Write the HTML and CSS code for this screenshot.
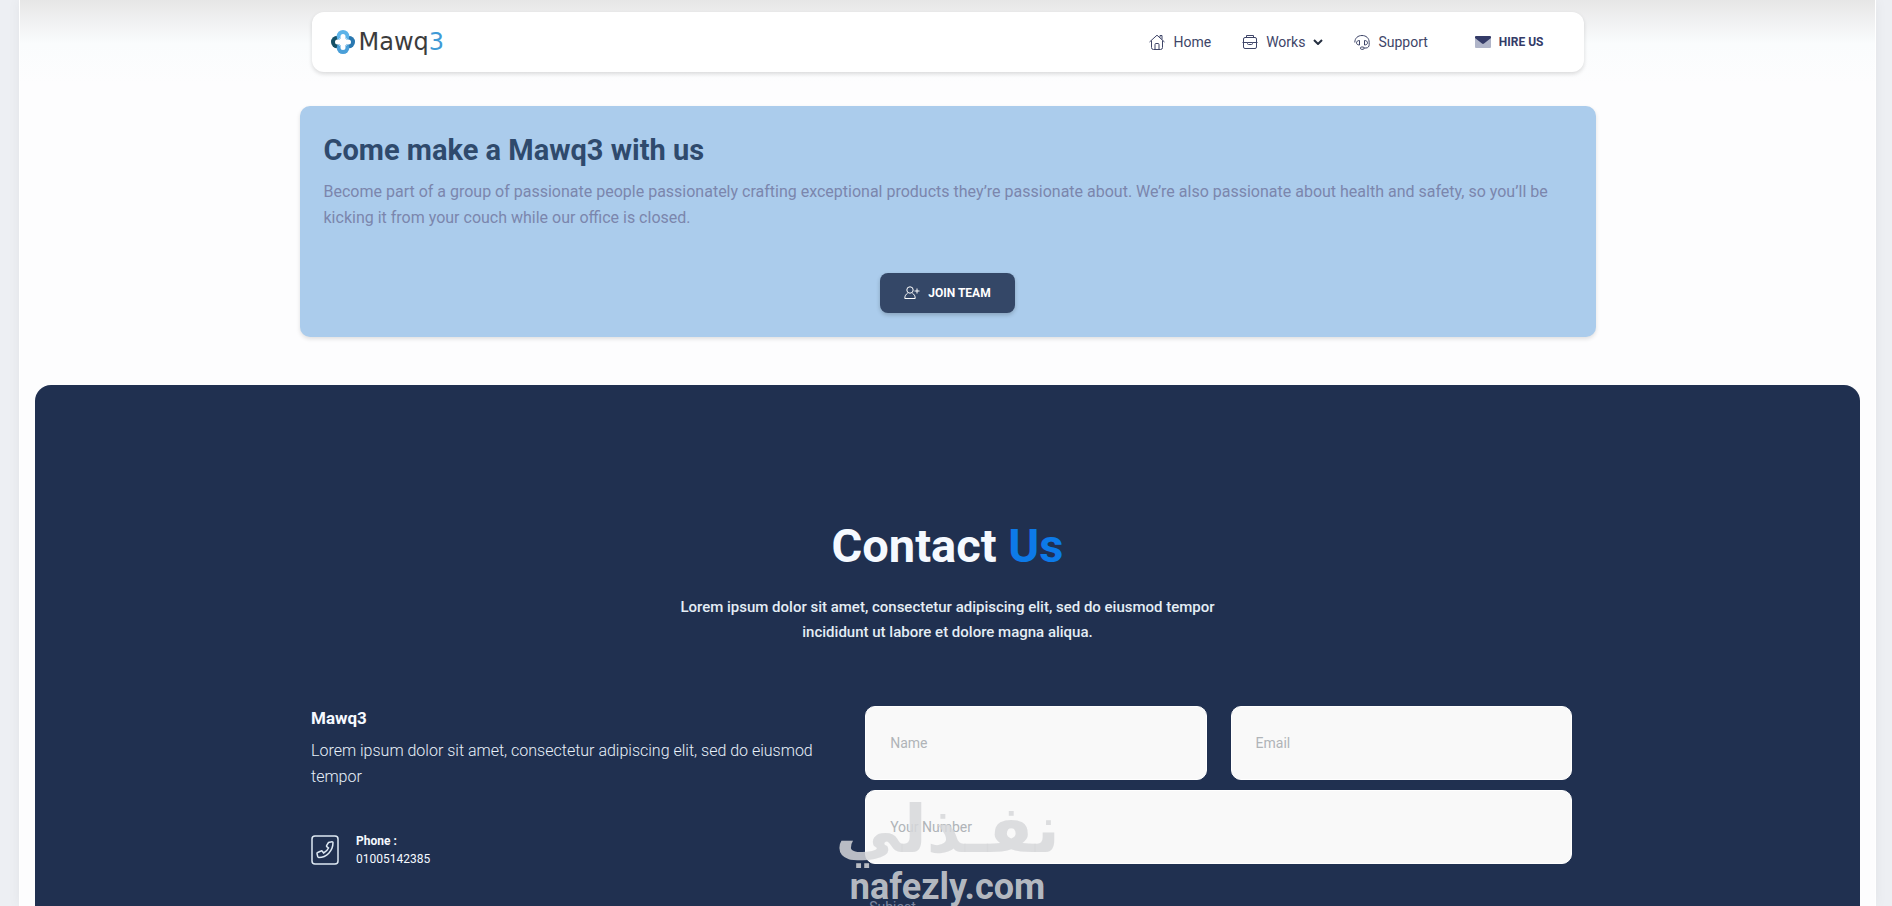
FILE: index.html
```
<!DOCTYPE html>
<html lang="en">
<head>
    <meta charset="UTF-8">
    <meta name="viewport" content="width=device-width, initial-scale=1.0">
    <title>Mawq3 - Contact Us</title>
    <link rel="stylesheet" href="styles.css">
</head>
<body>
    <div class="page">
        <header class="navbar">
            <a href="#" class="logo">
                <svg class="logo-mark" viewBox="0 0 26 26" aria-hidden="true">
                    <circle cx="7.300" cy="13" r="6.300" fill="#155066"/>
                    <circle cx="18.700" cy="13" r="6.300" fill="#2a78b0"/>
                    <circle cx="13" cy="7.300" r="6.300" fill="#5cb3e8"/>
                    <circle cx="13" cy="18.700" r="6.300" fill="#4a9fd8"/>
                    <path d="M13 7.500v11M7.500 13h11" fill="none" stroke="#fff" stroke-width="5" stroke-linecap="round"/>
                    <path d="M9.500 9.500l7 7M16.500 9.500l-7 7" fill="none" stroke="#fff" stroke-width="1"/>
                </svg>
                <span class="logo-text">Mawq<span class="logo-accent">3</span></span>
            </a>
            <nav class="nav-links">
                <a href="#home" class="nav-link">
                    <svg class="icon" viewBox="0 0 16 16" aria-hidden="true">
                        <path d="M.5 8 8 1.2 15.5 8M2.500 6.500v7a2 2 0 0 0 2 2h7a2 2 0 0 0 2-2v-7M11 3.500V1.500h2v4M6 15.500V10.500a1 1 0 0 1 1-1h2a1 1 0 0 1 1 1v5"/>
                    </svg>
                    Home
                </a>
                <a href="#works" class="nav-link">
                    <svg class="icon" viewBox="0 0 16 16" aria-hidden="true">
                        <rect x="1.500" y="3.500" width="13" height="11" rx="1.500"/>
                        <path d="M4.500 3.500v-2h7v2M.5 8.500h5M10.500 8.500h5M5.500 8.500v1a1 1 0 0 0 1 1h3a1 1 0 0 0 1-1v-1z"/>
                    </svg>
                    Works
                    <svg class="chevron" viewBox="0 0 10 6" aria-hidden="true"><path d="M1 1l4 4 4-4"/></svg>
                </a>
                <a href="#support" class="nav-link">
                    <svg class="icon" viewBox="0 0 16 16" aria-hidden="true">
                        <path d="M.8 8.500C.8 4 4 1.500 8 1.500s7.200 2.500 7.200 7v2c0 2-1.200 3.500-3.200 3.500h-2M5.500 6.500v4.500C3.500 11 2.500 10 2.500 8.800s1-2.300 3-2.300zM10.500 6.500v4.500c2 0 3-1 3-2.200s-1-2.300-3-2.300z"/>
                        <rect x="6.500" y="13" width="3.500" height="2.300" rx="1"/>
                    </svg>
                    Support
                </a>
                <a href="#hire" class="nav-link hire">
                    <svg class="icon-solid" viewBox="0 0 16 12" aria-hidden="true">
                        <rect y="1" width="16" height="11" rx="1" fill="#b0b5c9"/>
                        <path d="M1 0h14a1 1 0 0 1 1 1v1L9 7.500q-1 .8-2 0L0 2V1a1 1 0 0 1 1-1z" fill="#343b68"/>
                    </svg>
                    HIRE US
                </a>
            </nav>
        </header>

        <section class="join-card">
            <h2>Come make a Mawq3 with us</h2>
            <p>Become part of a group of passionate people passionately crafting exceptional products they’re passionate about. We’re also passionate about health and safety, so you’ll be kicking it from your couch while our office is closed.</p>
            <button type="button" class="join-button">
                <svg class="icon" viewBox="0 0 16 16" aria-hidden="true">
                    <circle cx="6" cy="5" r="3.200"/>
                    <path d="M3.500 8.500C1.800 9.200.8 10.800.8 13.500h10.400c0-2.700-1-4.300-2.700-5M13 3.500v5M10.500 6h5"/>
                </svg>
                JOIN TEAM
            </button>
        </section>

        <section class="contact">
            <div class="contact-heading">
                <h1>Contact <span>Us</span></h1>
                <p>Lorem ipsum dolor sit amet, consectetur adipiscing elit, sed do eiusmod tempor incididunt ut labore et dolore magna aliqua.</p>
            </div>

            <div class="contact-grid">
                <div class="contact-info">
                    <h3>Mawq3</h3>
                    <p>Lorem ipsum dolor sit amet, consectetur adipiscing elit, sed do eiusmod tempor</p>
                    <div class="phone">
                        <svg class="phone-icon" viewBox="0 0 28 30" aria-hidden="true">
                            <rect x="1" y="1" width="26" height="28" rx="3"/>
                            <path d="M17.500 7.500l3.500-.8c.6 0 1 .3 1 .9C22 16 15.500 22.500 7.800 22.500c-.5 0-.9-.3-1-.8L6 18.600c-.1-.5.1-.9.600-1.100l3.500-1.500c.4-.2.9-.1 1.200.3l1.300 1.700c2.200-1.100 3.900-2.800 4.900-5l-1.700-1.300c-.3-.3-.4-.8-.2-1.200z"/>
                        </svg>
                        <div>
                            <strong>Phone :</strong>
                            <a href="tel:01005142385">01005142385</a>
                        </div>
                    </div>
                </div>

                <form class="contact-form">
                    <input type="text" name="name" placeholder="Name" aria-label="Name">
                    <input type="email" name="email" placeholder="Email" aria-label="Email">
                    <input type="tel" name="number" class="wide" placeholder="Your Number" aria-label="Your Number">
                    <label for="subject" class="wide">Subject</label>
                    <input type="text" id="subject" name="subject" class="wide">
                </form>
            </div>
        </section>

        <div class="watermark">
            <span class="watermark-ar" lang="ar" dir="rtl">نفـذلي</span>
            <span class="watermark-en">nafezly.com</span>
        </div>
    </div>
</body>
</html>
```
FILE: styles.css
```
/* Base Reset and Variables */
* {
    margin: 0;
    padding: 0;
    box-sizing: border-box;
}

:root {
    --navy: #203050;
    --dark: #344767;
    --sky: #abccec;
    --muted: #7b86ad;
    --blue: #0d7ae8;
    --field: #f9f9f9;
}

html {
    background: #edeff3;
}

body {
    height: 100vh;
    overflow: hidden;
    font-family: Roboto, "Liberation Sans", sans-serif;
    font-size: 16px;
    color: var(--dark);
}

a {
    color: inherit;
    text-decoration: none;
}

.page {
    position: relative;
    height: 100%;
    overflow: hidden;
    margin: 0 16px 0 19px;
    padding: 12px 15px 0;
    border-left: 1px solid #fff;
    border-right: 1px solid #fff;
    background: linear-gradient(#e6e6e6, #eeeeef 16px, #fafcfd 44px, #fdfdfe 84px);
    box-shadow: 0 0 12px rgba(0, 0, 0, 0.05);
}

/* Navbar */
.navbar {
    display: flex;
    justify-content: space-between;
    align-items: center;
    max-width: 1272px;
    height: 60px;
    margin: 0 auto 34px;
    padding: 0 40px 0 18px;
    border-radius: 12px;
    background: #fff;
    box-shadow: 0 2px 4px rgba(0, 0, 0, 0.14);
}

.logo {
    display: flex;
    align-items: center;
    gap: 3px;
}

.logo-mark {
    width: 26px;
    height: 26px;
}

.logo-text {
    font-family: "DejaVu Sans", sans-serif;
    font-size: 24px;
    line-height: 28px;
    color: #3c3c3c;
}

.logo-accent {
    color: #3f9ad6;
}

.nav-links {
    display: flex;
    align-items: center;
    gap: 31px;
    font-size: 14px;
}

.nav-link {
    display: flex;
    align-items: center;
    gap: 8px;
    color: #3e4568;
}

.icon {
    width: 16px;
    height: 16px;
    fill: none;
    stroke: currentColor;
    stroke-width: 1;
}

.icon-solid {
    width: 16px;
    height: 12px;
}

.chevron {
    width: 10px;
    height: 6px;
    fill: none;
    stroke: #252f40;
    stroke-width: 2;
}

.hire {
    margin-left: 16px;
    font-size: 12px;
    font-weight: 700;
    color: #343b68;
}

/* Join Card */
.join-card {
    max-width: 1296px;
    margin: 0 auto 48px;
    padding: 24px;
    border-radius: 10px;
    background: var(--sky);
    box-shadow: 0 2px 4px rgba(0, 0, 0, 0.12);
}

.join-card h2 {
    margin-bottom: 8px;
    font-size: 29px;
    line-height: 41px;
    color: #2f4a6d;
}

.join-card p {
    line-height: 26px;
    color: var(--muted);
}

.join-button {
    display: flex;
    align-items: center;
    gap: 8px;
    height: 40px;
    margin: 42px auto 0;
    padding: 0 24px;
    border: none;
    border-radius: 8px;
    background: var(--dark);
    box-shadow: 0 2px 4px rgba(0, 0, 0, 0.2);
    font-family: inherit;
    font-size: 12px;
    font-weight: 700;
    color: #fff;
    cursor: pointer;
}

/* Contact Section */
.contact {
    padding: 128px 24px 96px;
    border-radius: 16px;
    background: var(--navy);
    color: #f5f9ff;
}

.contact-heading {
    max-width: 560px;
    margin: 0 auto 61px;
    text-align: center;
}

.contact-heading h1 {
    margin-bottom: 17px;
    font-size: 47px;
    line-height: 65px;
}

.contact-heading h1 span {
    color: var(--blue);
}

.contact-heading p {
    font-size: 15px;
    font-weight: 500;
    line-height: 25px;
    color: #e4edf5;
}

.contact-grid {
    display: grid;
    grid-template-columns: 3fr 4fr;
    gap: 24px;
    max-width: 1273px;
    margin: 0 auto;
    padding-right: 12px;
}

.contact-info h3 {
    margin-bottom: 8px;
    font-size: 17px;
    line-height: 24px;
}

.contact-info p {
    font-weight: 300;
    line-height: 26px;
    color: #e8f1fa;
}

.phone {
    display: flex;
    align-items: center;
    gap: 17px;
    margin-top: 42px;
    font-size: 12px;
    line-height: 18px;
}

.phone strong,
.phone a {
    display: block;
}

.phone-icon {
    width: 28px;
    height: 30px;
    fill: none;
    stroke: #dde8f2;
    stroke-width: 1.5;
}

.contact-form {
    display: grid;
    grid-template-columns: 1fr 1fr;
    gap: 10px 24px;
}

.contact-form input {
    width: 100%;
    height: 74px;
    padding: 0 24px;
    border: 1px solid #fff;
    border-radius: 10px;
    background: var(--field);
    font-family: inherit;
    font-size: 14px;
    color: #495057;
}

.contact-form input::placeholder {
    color: #b0b4b8;
}

.contact-form .wide {
    grid-column: 1 / -1;
}

.contact-form label {
    padding: 23px 4px 0;
    font-size: 14px;
    line-height: 20px;
    color: #7b86a0;
}

/* Watermark over the page */
.watermark {
    position: absolute;
    left: 50%;
    bottom: 0;
    transform: translateX(-50%);
    display: flex;
    flex-direction: column;
    align-items: center;
    font-weight: 700;
    color: rgba(214, 216, 218, 0.84);
    pointer-events: none;
}

.watermark-ar {
    font-family: "DejaVu Sans", sans-serif;
    font-size: 66px;
    line-height: 76px;
}

.watermark-en {
    font-size: 36px;
    line-height: 38px;
}
```
